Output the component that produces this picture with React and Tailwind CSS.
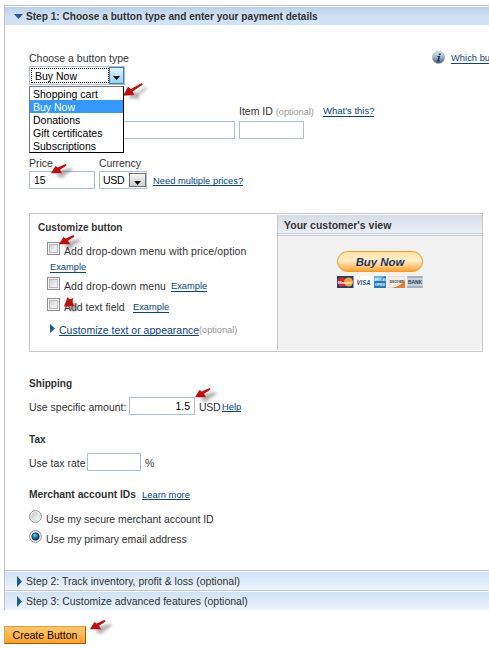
import React from "react";

const Link = ({ className = "h-[11px] text-[9.4px]", children }) => (
  <a className={`shrink-0 border-b border-[#084482] leading-[12px] whitespace-nowrap text-[#084482] ${className}`}>{children}</a>
);

const Field = ({ className = "", children }) => (
  <div className={`h-[18px] shrink-0 border border-[#a9bfdb] bg-white px-1 leading-[17px] text-black ${className}`}>{children}</div>
);

const Checkbox = () => (
  <span className="h-[13px] w-[13px] shrink-0 border border-[#8e8f8f] bg-[#f4f4f4] p-px">
    <span className="block h-full w-full border border-[#b9bdc2] bg-linear-to-br from-[#cfd2d8] to-[#fbfbfb]" />
  </span>
);

const Radio = ({ checked }) => (
  <svg className="h-[13px] w-[13px] shrink-0" viewBox="0 0 13 13">
    <defs>
      <radialGradient id="dot" cx=".4" cy=".35" r=".65">
        <stop offset="0" stopColor="#7fd6f5" />
        <stop offset=".5" stopColor="#1678ae" />
        <stop offset="1" stopColor="#082e50" />
      </radialGradient>
      <linearGradient id="ring" x1="0" y1="0" x2="1" y2="1">
        <stop offset="0" stopColor="#c4c8cc" />
        <stop offset="1" stopColor="#fafafa" />
      </linearGradient>
    </defs>
    <circle cx="6.5" cy="6.5" r="5.9" fill="#f6f6f6" stroke="#8e8f8f" />
    <circle cx="6.5" cy="6.5" r="4.2" fill="url(#ring)" stroke="#d0d3d6" strokeWidth=".6" />
    {checked && <circle cx="6.5" cy="6.5" r="3.7" fill="url(#dot)" stroke="#10385c" strokeWidth=".7" />}
  </svg>
);

const ARROWS = {
  long: ["M0 12.7L5 3.7L8 6L18.6 0L19.8 1.4L9.6 8.4L11.3 12Z", "M5 15L12 8L14 10L23 4L24 6L16 12L16 16Z"],
  medium: ["M0 9.3L4.4 2L6.8 3.6L14.4 0L15.6 1.4L9 5.8L11.2 9.3Z", "M5 12L10 6L20 4L22 6L14 11L12 14Z"],
  stub: ["M0 9.5L3.6 0L6 2.6L9 .8L8.6 5L9.8 9Z", "M3 10L9 4L15 10L12 14L6 14Z"],
};

const Arrow = ({ className, kind = "medium" }) => (
  <svg className={`absolute overflow-visible ${className}`} viewBox="0 0 28 20" width="28" height="20">
    <path className="blur-[1.5px]" d={ARROWS[kind][1]} fill="#555" opacity=".45" />
    <path d={ARROWS[kind][0]} fill="#c00d0d" />
  </svg>
);

const RightTriangle = ({ className = "" }) => (
  <svg className={`shrink-0 ${className}`} viewBox="0 0 6 10" preserveAspectRatio="none"><path d="M0 0L6 5L0 10Z" fill="#225c96" /></svg>
);

const DownTriangle = () => (
  <svg width="7" height="4" viewBox="0 0 7 4"><path d="M0 0H7L3.5 4Z" /></svg>
);

const Optional = () => <span className="text-[9.4px] tracking-[-.1px] text-[#999]">(optional)</span>;

const StepBar = ({ children }) => (
  <div className="flex h-5 items-center border-t border-[#c4c4c4] bg-linear-to-b from-[#cfe1f6] to-[#edf4fc] pt-px pl-[12px] shadow-[inset_0_1px_0_#f4f8fd]">
    <RightTriangle className="mr-[4px] h-[11px] w-[5px]" />
    <span>{children}</span>
  </div>
);

const CardIcons = () => (
  <svg className="mt-[4px] block" width="86" height="12" viewBox="0 0 86 12" fontFamily="Liberation Sans, sans-serif" fontWeight="bold">
    <rect width="16.5" height="12" fill="#223f78" />
    <circle cx="5" cy="6" r="4.5" fill="#dc2b20" /><circle cx="11.5" cy="6" r="4.5" fill="#f5a43a" />
    <text x="1" y="7.6" fontSize="4" textLength="14" lengthAdjust="spacingAndGlyphs" fill="#fff">Master</text>
    <rect x="18.5" width="16.5" height="12" fill="#fff" />
    <text x="19.5" y="8.8" fontSize="7" fontStyle="italic" textLength="14" lengthAdjust="spacingAndGlyphs" fill="#1a5290">VISA</text>
    <path d="M19.5 3.5h2l1 4z" fill="#e9a53f" />
    <rect x="37" width="12" height="12" fill="#1f7cc0" /><path d="M37 0h12l-12 5z" fill="#66b5e4" />
    <text x="37.3" y="5.4" fontSize="3" textLength="11.2" lengthAdjust="spacingAndGlyphs" fill="#fff">AMERICAN</text>
    <text x="38" y="9.6" fontSize="3" textLength="10" lengthAdjust="spacingAndGlyphs" fill="#fff">EXPRESS</text>
    <rect x="51.7" y=".2" width="16" height="11.6" fill="#f2eee8" stroke="#ccc6bd" strokeWidth=".4" /><path d="M55 12Q64 10 68 4V12Z" fill="#ec7a2d" />
    <text x="52.7" y="6.7" fontSize="3.2" textLength="14" lengthAdjust="spacingAndGlyphs" fill="#332d2a">DISCOVER</text>
    <rect x="70.3" width="15.5" height="12" fill="#ccd1d7" /><path d="M70.3 0h15.5v2H70.3zM70.3 10h15.5v2H70.3z" fill="#a9b2bc" />
    <text x="71" y="8" fontSize="5" textLength="14" lengthAdjust="spacingAndGlyphs" fill="#203c69">BANK</text>
  </svg>
);

export default function App() {
  return (
    <main className="relative h-[649px] w-[489px] overflow-hidden bg-white font-['Liberation_Sans',Arial,sans-serif] text-[10.5px] leading-[12px] whitespace-nowrap text-[#333]">
      <div className="ml-[4px] h-[606px] pt-[5px]">
        <section className="h-[605px] border-t border-l border-[#c4c4c4]">
          <h2 className="mt-px flex h-[18px] items-center bg-linear-to-b from-[#b8d0ee] via-[#cfe0f4] to-[#d2e3f6] pl-[9px] text-[10.1px] font-bold">
            <svg className="mr-[3px] h-[5px] w-[9px]" viewBox="0 0 9 5"><path d="M0 0H9L4.5 5Z" fill="#225c96" /></svg>
            <span className="mt-[2px]">Step 1: Choose a button type and enter your payment details</span>
          </h2>

          <div className="h-[545px] pl-[24px]">
            <div className="flex h-[41px] items-end">
              <div className="flex h-[17px] w-full items-start">
                <span className="mt-[3px] w-[403px] shrink-0">Choose a button type</span>
                <svg className="mt-[2px] mr-[6px] h-[13px] w-[13px] shrink-0" viewBox="0 0 13 13">
                  <defs><linearGradient id="info" x1="0" y1="0" x2="0" y2="1"><stop offset="0" stopColor="#e6ebf0" /><stop offset=".5" stopColor="#9eb0c3" /><stop offset="1" stopColor="#37597f" /></linearGradient></defs>
                  <circle cx="6.5" cy="6.5" r="6.1" fill="url(#info)" stroke="#8ba0b6" strokeWidth=".6" />
                  <path d="M7.1 2.4h1.8l-.4 1.7H6.7zM5.5 5h2.7L7 9.4h.9l-.3 1.1H4.5l.3-1.1h.7l.8-3.3h-1z" fill="#163657" />
                </svg>
                <Link className="mt-[3px] h-[12px] text-[9.4px]">Which bu</Link>
              </div>
            </div>

            <div className="relative">
              <div className="flex h-[19px] w-[96px] border border-[#a9bfdb] bg-white">
                <div className="m-px mr-0 w-[78px] border border-dotted border-black pl-[3px] leading-[15px] text-black">Buy Now</div>
                <div className="flex flex-1 items-end justify-center border border-[#3c7fb1] bg-linear-to-b from-[#e5f5fc] to-[#98d1ef] pb-[3px]">
                  <DownTriangle />
                </div>
              </div>
              <ul className="absolute top-[20px] left-0 z-10 h-[67px] w-[95px] border border-black border-t-[#777] border-l-[#777] bg-white leading-[14px] text-black *:h-[13px] *:pl-[3px]">
                <li>Shopping cart</li>
                <li className="bg-[#3399ff] text-white">Buy Now</li>
                <li>Donations</li>
                <li>Gift certificates</li>
                <li>Subscriptions</li>
              </ul>
            </div>

            <div className="mt-[19px] flex h-[17px] items-start pl-[210px]">
              <span className="mt-[1px] w-[84px]">Item ID <Optional /></span>
              <Link className="mt-[1px] h-[12px] text-[9.5px]">What's this?</Link>
            </div>
            <div className="flex gap-[4px]"><Field className="w-[206px]" /><Field className="w-[65px]" /></div>

            <div className="mt-[18px] flex h-[14px]"><span className="w-[70px]">Price</span><span className="tracking-[-.1px]">Currency</span></div>
            <div className="flex items-center">
              <Field className="mr-[4px] w-[66px]">15</Field>
              <div className="mr-[6px] flex h-[18px] w-[48px] border border-[#a9bfdb] pl-[3px] leading-[17px] text-black">
                <span className="w-[26px] tracking-[-.3px]">USD</span>
                <span className="mt-px flex h-[14px] w-[17px] items-end justify-center border border-[#707070] bg-linear-to-b from-[#f5f5f5] to-[#cfcfcf] pb-px"><DownTriangle /></span>
              </div>
              <Link>Need multiple prices?</Link>
            </div>

            <div className="mt-[24px] flex h-[139px] w-[454px] border border-[#c8c8c8]">
              <div className="w-[247px] pt-[8px] pl-[8px]">
                <h3 className="text-[10px] font-bold">Customize button</h3>
                <div className="mt-[8px] flex h-[19px] pl-[9px]"><Checkbox /><span className="mt-[3px] ml-[4px] tracking-[.09px]">Add drop-down menu with price/option</span></div>
                <div className="flex h-[16px] pl-[12px]"><Link className="h-[12px] text-[9.3px]">Example</Link></div>
                <div className="flex h-[21px] pl-[9px]"><Checkbox /><span className="mt-[3px] ml-[4px] w-[107px] tracking-[.09px]">Add drop-down menu</span><Link className="mt-[3px] h-[12px] text-[9.3px]">Example</Link></div>
                <div className="flex h-[21px] pl-[9px]"><Checkbox /><span className="mt-[3px] ml-[4px] w-[69px]">Add text field</span><Link className="mt-[3px] h-[12px] text-[9.3px]">Example</Link></div>
                <div className="mt-[5px] flex pl-[12px]"><RightTriangle className="mr-[4px] h-[9px] w-[5px]" /><Link className="h-[12px] text-[10.5px]">Customize text or appearance</Link><Optional /></div>
              </div>
              <div className="my-px flex-1 border-l border-[#c8c8c8] bg-[#f2f2f2]">
                <div className="h-[19px] border-b border-[#c6d0dc] bg-linear-to-b from-[#d6dce7] to-[#eceff4] pt-[4px] pl-[6px] font-bold">Your customer's view</div>
                <div className="mt-px h-px bg-[#c6d0dc]" />
                <div className="mt-[15px] ml-[59px] w-[86px]">
                  <div className="h-[21px] rounded-full border border-[#f29a20] bg-linear-to-b from-[#ffe4a9] via-[#ffedc5] via-45% to-[#ffa51d] text-center text-[11.4px] leading-[20px] font-bold italic text-[#173765]">Buy Now</div>
                  <CardIcons />
                </div>
              </div>
            </div>

            <h3 className="mt-[26px] h-[19px] text-[10.1px] font-bold">Shipping</h3>
            <div className="flex h-[18px] items-center"><span className="mt-px w-[100px]">Use specific amount:</span><Field className="mr-[4px] w-[66px] text-right">1.5</Field><span className="mt-px w-[23px] tracking-[-.3px]">USD</span><Link>Help</Link></div>
            <h3 className="mt-[19px] h-[19px] text-[10.1px] font-bold">Tax</h3>
            <div className="flex h-[18px] items-center"><span className="mt-px w-[58px]">Use tax rate</span><Field className="mr-[4px] w-[54px]" /><span className="mt-px">%</span></div>
            <div className="mt-[18px] flex h-[21px]"><h3 className="w-[113px] text-[10.3px] font-bold">Merchant account IDs</h3><Link>Learn more</Link></div>
            <div className="flex h-[20px]"><Radio /><span className="mt-[3px] ml-[4px] tracking-[-.07px]">Use my secure merchant account ID</span></div>
            <div className="flex h-[20px]"><Radio checked /><span className="mt-[3px] ml-[4px] tracking-[-.04px]">Use my primary email address</span></div>
          </div>
          <StepBar>Step 2: Track inventory, profit &amp; loss (optional)</StepBar>
          <StepBar>Step 3: Customize advanced features (optional)</StepBar>
        </section>
      </div>
      <button className="mt-[20px] ml-[4px] block h-[18px] w-[82px] border border-[#d8a04c] border-r-[#985f15] border-b-[#985f15] bg-linear-to-b from-[#ffc667] via-[#ffb84a] to-[#ff9f19] text-center leading-[17px] text-black">Create Button</button>

      <Arrow kind="long" className="top-[83px] left-[123px]" />
      <Arrow className="top-[164px] left-[51px]" />
      <Arrow className="top-[235px] left-[59px]" />
      <Arrow kind="stub" className="top-[297px] left-[64px]" />
      <Arrow className="top-[388px] left-[195px]" />
      <Arrow className="top-[620px] left-[90px]" />
    </main>
  );
}
